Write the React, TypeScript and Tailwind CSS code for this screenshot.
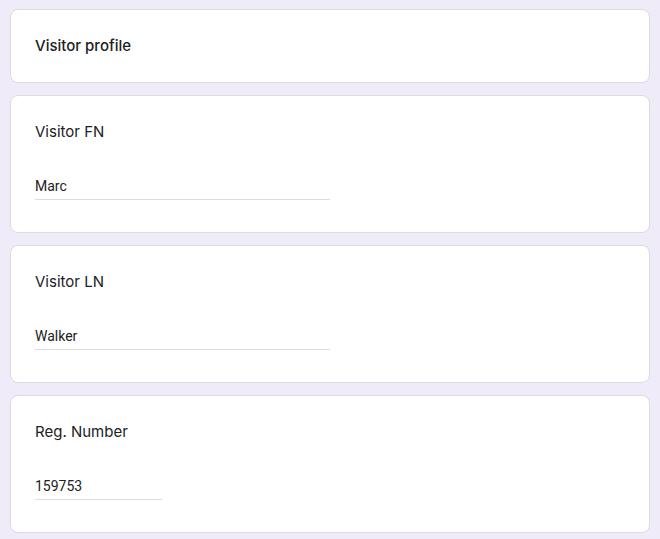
import React from "react";

const fields = [
  { label: "Visitor FN", value: "Marc", width: "w-[295px]" },
  { label: "Visitor LN", value: "Walker", width: "w-[295px]" },
  { label: "Reg. Number", value: "159753", width: "w-[127px]" },
];

const App = () => {
  return (
    <div className="min-h-[539px] bg-[#f0ebf8] px-[10px] pt-[9px] pb-[7px] flex flex-col gap-3">
      <div className="bg-white border border-[#dadce0] rounded-lg px-6 pt-6 pb-6">
        <p className="text-[15px] leading-6 font-medium text-[#202124] font-['Inter',sans-serif]">
          Visitor profile
        </p>
      </div>

      {fields.map((f) => (
        <div
          key={f.label}
          className="bg-white border border-[#dadce0] rounded-lg px-6 pt-6 pb-8"
        >
          <p className="text-[15px] leading-6 text-[#202124] font-['Inter',sans-serif]">
            {f.label}
          </p>
          <div
            className={`${f.width} mt-8 pb-[3px] border-b border-[#dadce0]`}
          >
            <span className="block text-[14px] leading-5 text-[#202124] font-['Roboto',sans-serif]">
              {f.value}
            </span>
          </div>
        </div>
      ))}
    </div>
  );
};

export default App;
